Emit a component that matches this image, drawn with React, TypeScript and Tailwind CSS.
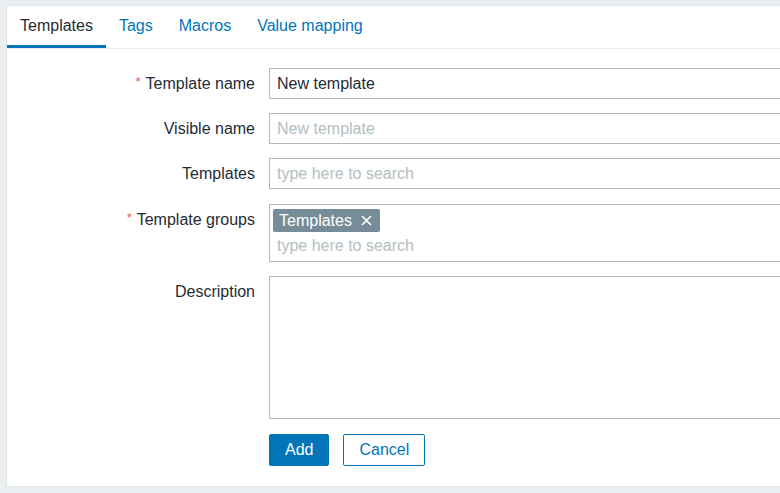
import React from "react";

const Label = ({ text, required }: { text: string; required?: boolean }) => (
  <div className="w-[248px] h-[31px] shrink-0 flex items-center justify-end text-[16px] text-[#1f2c33]">
    {required && <span className="text-[#e45959] text-[13px] mr-[5px] -mt-[4px]">*</span>}
    {text}
  </div>
);

export default function App() {
  return (
    <div className="w-[780px] h-[493px] bg-[#ebeef0] overflow-hidden pt-[5px] pl-[6px] font-['Liberation_Sans',Arial,sans-serif]">
      <div className="w-[800px] h-[482px] bg-white border border-[#dfe4e7]">
        <div className="flex h-[43px] border-b border-[#ebeef0] text-[16px]">
          <div className="px-[13px] pt-[1px] flex items-center border-b-[3px] border-[#0275b8] text-[#1f2c33]">Templates</div>
          <div className="px-[13px] pt-[1px] flex items-center border-b-[3px] border-transparent text-[#0275b8]">Tags</div>
          <div className="px-[13px] pt-[1px] flex items-center border-b-[3px] border-transparent text-[#0275b8]">Macros</div>
          <div className="px-[13px] pt-[1px] flex items-center border-b-[3px] border-transparent text-[#0275b8]">Value mapping</div>
        </div>
        <div className="pt-[19px]">
          <div className="flex mb-[14px]">
            <Label text="Template name" required />
            <div className="ml-[14px] flex-1 h-[31px] border border-[#acbbc2] flex items-center pl-[7px] text-[16px] text-[#1f2c33]">
              New template
            </div>
          </div>
          <div className="flex mb-[14px]">
            <Label text="Visible name" />
            <div className="ml-[14px] flex-1 h-[31px] border border-[#acbbc2] flex items-center pl-[7px] text-[16px] text-[#b4bdc1]">
              New template
            </div>
          </div>
          <div className="flex mb-[15px]">
            <Label text="Templates" />
            <div className="ml-[14px] flex-1 h-[31px] border border-[#acbbc2] flex items-center pl-[7px] text-[16px] text-[#b4bdc1]">
              type here to search
            </div>
          </div>
          <div className="flex mb-[14px]">
            <Label text="Template groups" required />
            <div className="ml-[14px] flex-1 h-[58px] border border-[#acbbc2] pt-[4px] pl-[3px] flex flex-col">
              <div className="flex">
                <div className="h-[23px] bg-[#768d99] rounded-[2px] flex items-center pl-[6px] pr-[8px] text-[16px] text-white">
                  Templates
                  <svg className="ml-[9px]" width="11" height="11" viewBox="0 0 11 11">
                    <path d="M1 1 L10 10 M10 1 L1 10" stroke="white" strokeWidth="1.6" />
                  </svg>
                </div>
              </div>
              <div className="h-[27px] flex items-center pl-[4px] text-[16px] text-[#b4bdc1]">type here to search</div>
            </div>
          </div>
          <div className="flex">
            <Label text="Description" />
            <div className="ml-[14px] flex-1 h-[143px] border border-[#acbbc2]"></div>
          </div>
          <div className="flex ml-[262px] mt-[15px] gap-[14px] text-[16px]">
            <div className="h-[32px] px-[15px] bg-[#0275b8] border border-[#0275b8] rounded-[2px] text-white flex items-center">Add</div>
            <div className="h-[32px] px-[15px] bg-white border border-[#0275b8] rounded-[2px] text-[#0275b8] flex items-center">Cancel</div>
          </div>
        </div>
      </div>
    </div>
  );
}
